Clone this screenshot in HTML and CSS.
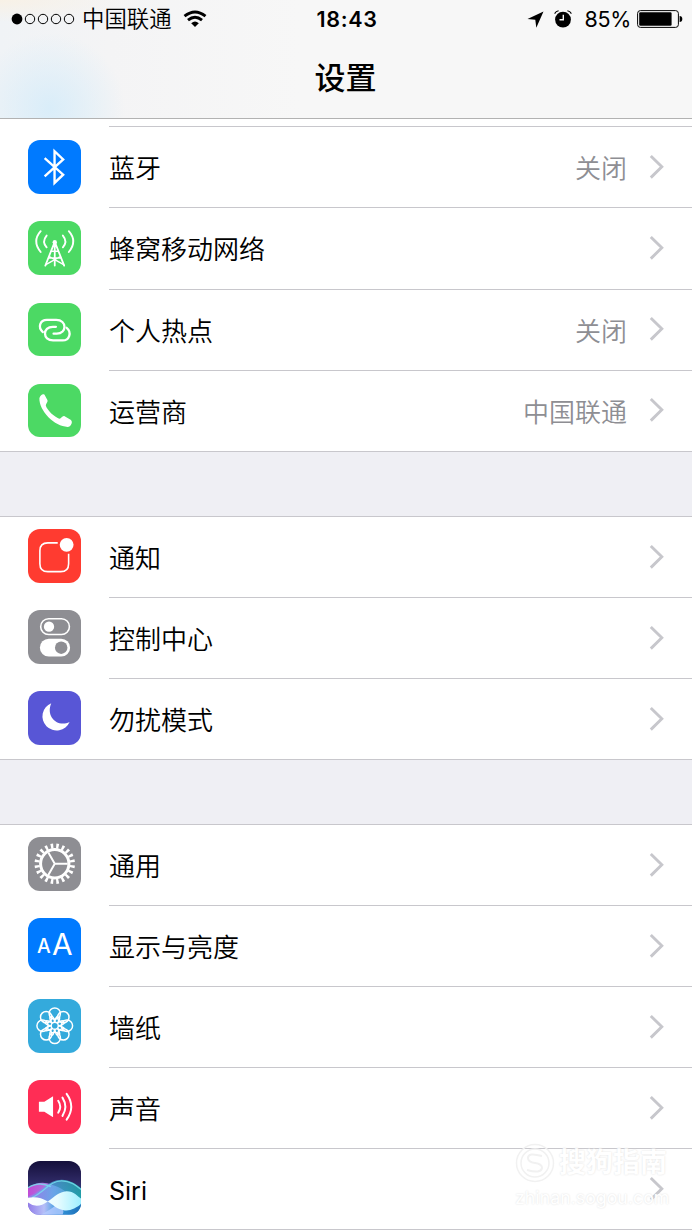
FILE: index.html
```html
<!DOCTYPE html>
<html lang="zh-CN">
<head>
  <meta charset="UTF-8">
  <meta name="viewport" content="width=device-width, initial-scale=1.0">
  <title>设置</title>
  <link rel="stylesheet" href="styles.css">
</head>
<body>

  <svg class="defs">
    <symbol id="chevron" viewBox="0 0 16 26">
      <path d="M1.8 2 L12.8 12.8 L1.8 23.6" fill="none" stroke="#c7c7cc" stroke-width="2.9"/>
    </symbol>
  </svg>

  <header>
    <div class="status">
      <div class="status-left">
        <svg class="signal" width="64" height="12" viewBox="0 0 64 12">
          <circle cx="6" cy="6" r="5.4"/>
          <g fill="none" stroke="#000" stroke-width="1">
            <circle cx="19" cy="6" r="4.7"/>
            <circle cx="32" cy="6" r="4.7"/>
            <circle cx="45" cy="6" r="4.7"/>
            <circle cx="58" cy="6" r="4.7"/>
          </g>
        </svg>
        <span class="carrier">中国联通</span>
        <svg class="wifi" width="24" height="18" viewBox="0 0 24 18">
          <g fill="none" stroke="#000" stroke-width="2.9">
            <path d="M1.5 6.2 Q12 -2.2 22.5 6.2"/>
            <path d="M5 10.2 Q12 4.4 19 10.2"/>
          </g>
          <path d="M8.2 13.2 Q12 10 15.8 13.2 L12 17 Z"/>
        </svg>
      </div>
      <div class="clock">18:43</div>
      <div class="status-right">
        <svg width="17" height="17" viewBox="0 0 17 17">
          <path d="M16.5 0.5 L0.5 8 L8.3 8.7 L9.3 16.8 Z"/>
        </svg>
        <svg class="alarm" width="18" height="18" viewBox="0 0 18 18">
          <circle cx="9" cy="9.6" r="7.9"/>
          <path d="M0.6 3.6 Q2 1.3 4.6 0.8 M17.4 3.6 Q16 1.3 13.4 0.8" fill="none" stroke="#000" stroke-width="1.1"/>
          <path d="M9.3 4.8 V9.8 H5.5" fill="none" stroke="#f7f7f7" stroke-width="1.4"/>
        </svg>
        <span class="percent">85%</span>
        <svg class="battery" width="46" height="18" viewBox="0 0 46 18">
          <rect x="0.6" y="0.6" width="40.8" height="16.8" rx="2.8" fill="none" stroke="#000" stroke-width="1"/>
          <rect x="2.2" y="2.2" width="32.4" height="13.6" rx="1.2"/>
          <path d="M42.6 6 Q45.3 6.2 45.3 9 Q45.3 11.8 42.6 12 Z"/>
        </svg>
      </div>
    </div>
    <h1>设置</h1>
  </header>

  <main>
    <div class="group first">
      <div class="tail"></div>
      <div class="row">
        <svg class="icon blue" viewBox="0 0 54 54">
          <path d="M16.8 18.3 L35.5 35 L26.8 43.3 V11.3 L35.5 19.6 L16.8 36.6" fill="none" stroke="#fff" stroke-width="2.4"/>
        </svg>
        <div class="cell"><span class="label">蓝牙</span><span class="value">关闭</span><svg class="chevron"><use href="#chevron"/></svg></div>
      </div>
      <div class="row">
        <svg class="icon green" viewBox="0 0 54 54">
          <g fill="none" stroke="#fff" stroke-width="1.9" stroke-linecap="round" stroke-linejoin="round">
            <path d="M12.8 10.3 Q3.8 20.5 12.8 31.3 M18.8 14.7 Q13.7 20.8 18.8 26.6"/>
            <path d="M41.2 10.3 Q50.2 20.5 41.2 31.3 M35.2 14.7 Q40.3 20.8 35.2 26.6"/>
            <path d="M27 21 L17.5 45 M27 21 L36.5 45 M27 21 V45" stroke-width="1.8"/>
            <path d="M23.8 30.5 H30.2 M21 37.3 H33 M18 44 L32 36.3 M36 44 L22 36.3" stroke-width="1.4"/>
          </g>
          <circle cx="27" cy="21.5" r="2.2" fill="#fff"/>
        </svg>
        <div class="cell"><span class="label">蜂窝移动网络</span><svg class="chevron"><use href="#chevron"/></svg></div>
      </div>
      <div class="row">
        <svg class="icon green" viewBox="0 0 54 54">
          <g fill="none" stroke="#fff" stroke-width="2.3" stroke-linecap="round">
            <path d="M15 29.3 C9.5 24.5 12.2 17 19 17 H28.5 C39.5 17 39.5 31 29 31 H25.8"/>
            <path d="M39 25 C44.5 29.5 41.8 37.8 35 37.8 H25.3 C14.5 37.8 14.5 24 25 24 H28.2"/>
          </g>
        </svg>
        <div class="cell"><span class="label">个人热点</span><span class="value">关闭</span><svg class="chevron"><use href="#chevron"/></svg></div>
      </div>
      <div class="row">
        <svg class="icon green" viewBox="0 0 54 54">
          <path d="M11.5 14.5 C12 11.5 15 9.5 16.7 10.8 L19.7 16.5 C20.3 18.6 17.6 20.2 18 22 C19.8 27 26.5 33.3 31.5 35 C33.6 35.3 34.3 32 36.5 32.3 L43 36 C46 38 43.2 43.3 40 43.3 C27 43.3 11 27 11.5 14.5 Z" fill="#fff"/>
        </svg>
        <div class="cell"><span class="label">运营商</span><span class="value">中国联通</span><svg class="chevron"><use href="#chevron"/></svg></div>
      </div>
    </div>

    <div class="group">
      <div class="row">
        <svg class="icon red" viewBox="0 0 54 54">
          <path d="M30 14 H20 Q12 14 12 22 V35 Q12 43 20 43 H33 Q41 43 41 35 V25" fill="none" stroke="#fff" stroke-width="1.6"/>
          <circle cx="39" cy="16" r="7" fill="#fff"/>
        </svg>
        <div class="cell"><span class="label">通知</span><svg class="chevron"><use href="#chevron"/></svg></div>
      </div>
      <div class="row">
        <svg class="icon gray" viewBox="0 0 54 54">
          <rect x="12.8" y="8.8" width="29" height="16" rx="8" fill="none" stroke="#fff" stroke-width="1.6"/>
          <circle cx="21.2" cy="16.8" r="5.2" fill="#fff"/>
          <rect x="12" y="29" width="30.5" height="18" rx="9" fill="#fff"/>
          <circle cx="33.5" cy="38" r="6.3" fill="#8e8e93"/>
        </svg>
        <div class="cell"><span class="label">控制中心</span><svg class="chevron"><use href="#chevron"/></svg></div>
      </div>
      <div class="row">
        <svg class="icon purple" viewBox="0 0 54 54">
          <path d="M23.5 12.3 A14.3 14.3 0 1 0 42 31.2 C30 37.5 17.5 25.5 23.5 12.3 Z" fill="#fff"/>
        </svg>
        <div class="cell"><span class="label">勿扰模式</span><svg class="chevron"><use href="#chevron"/></svg></div>
      </div>
    </div>

    <div class="group">
      <div class="row">
        <svg class="icon gray" viewBox="0 0 54 54">
          <g fill="none" stroke="#fff">
            <circle cx="27" cy="27" r="14.3" stroke-width="3"/>
            <!-- 20 teeth around the ring -->
            <circle cx="27" cy="27" r="17.9" stroke-width="5" pathLength="80" stroke-dasharray="1.8 2.2" stroke-dashoffset="-1.1"/>
            <path d="M27 27 H40 M27 27 L20.5 15.7 M27 27 L20.5 38.3" stroke-width="2"/>
          </g>
        </svg>
        <div class="cell"><span class="label">通用</span><svg class="chevron"><use href="#chevron"/></svg></div>
      </div>
      <div class="row">
        <svg class="icon blue" viewBox="0 0 54 54">
          <text class="aa" x="9" y="35.3" font-size="20.5" textLength="13.8" lengthAdjust="spacingAndGlyphs">A</text>
          <text class="aa big" x="24.3" y="37.3" font-size="29.5" textLength="20.8" lengthAdjust="spacingAndGlyphs">A</text>
        </svg>
        <div class="cell"><span class="label">显示与亮度</span><svg class="chevron"><use href="#chevron"/></svg></div>
      </div>
      <div class="row">
        <svg class="icon cyan" viewBox="0 0 54 54">
          <defs>
            <g id="petal">
              <circle cx="27" cy="14.7" r="5.7"/>
              <path d="M27 27 Q21.4 22 22.1 17.6 M27 27 Q32.6 22 31.9 17.6"/>
            </g>
          </defs>
          <g fill="none" stroke="#fff" stroke-width="1.5">
            <use href="#petal"/>
            <use href="#petal" transform="rotate(45 27 27)"/>
            <use href="#petal" transform="rotate(90 27 27)"/>
            <use href="#petal" transform="rotate(135 27 27)"/>
            <use href="#petal" transform="rotate(180 27 27)"/>
            <use href="#petal" transform="rotate(225 27 27)"/>
            <use href="#petal" transform="rotate(270 27 27)"/>
            <use href="#petal" transform="rotate(315 27 27)"/>
            <circle cx="27" cy="27" r="3.6" fill="#34aadc"/>
          </g>
        </svg>
        <div class="cell"><span class="label">墙纸</span><svg class="chevron"><use href="#chevron"/></svg></div>
      </div>
      <div class="row">
        <svg class="icon pink" viewBox="0 0 54 54">
          <path d="M11 22 H16.5 L25.3 16.5 V37.5 L16.5 32 H11 Z" fill="#fff"/>
          <g fill="none" stroke="#fff" stroke-width="2" stroke-linecap="round">
            <path d="M30.5 21 Q34.5 27 30.5 33"/>
            <path d="M34.8 17.8 Q40.6 27 34.8 36.2"/>
            <path d="M39 14 Q48.3 27 39 40"/>
          </g>
        </svg>
        <div class="cell"><span class="label">声音</span><svg class="chevron"><use href="#chevron"/></svg></div>
      </div>
      <div class="row">
        <svg class="icon" viewBox="0 0 54 54">
          <defs>
            <linearGradient id="night" x1="0" y1="0" x2="0" y2="1">
              <stop offset="0" stop-color="#140f3a"/>
              <stop offset=".4" stop-color="#2f2a66"/>
              <stop offset="1" stop-color="#1b84bd"/>
            </linearGradient>
            <linearGradient id="waveA">
              <stop offset="0" stop-color="#dc4ce4"/>
              <stop offset=".45" stop-color="#b98df4"/>
              <stop offset="1" stop-color="#7b68dc"/>
            </linearGradient>
            <linearGradient id="waveB">
              <stop offset="0" stop-color="#8d88ee"/>
              <stop offset=".5" stop-color="#4fb4ea"/>
              <stop offset="1" stop-color="#1dc0b4"/>
            </linearGradient>
            <linearGradient id="floor">
              <stop offset="0" stop-color="#8f7ee8"/>
              <stop offset=".3" stop-color="#c0c6fa"/>
              <stop offset=".55" stop-color="#2f96dc"/>
              <stop offset="1" stop-color="#1764b5"/>
            </linearGradient>
            <linearGradient id="glow">
              <stop offset="0" stop-color="#fff"/>
              <stop offset=".55" stop-color="#e8fcff"/>
              <stop offset="1" stop-color="#9defff"/>
            </linearGradient>
          </defs>
          <rect width="54" height="54" fill="url(#night)"/>
          <path d="M0 27 Q12 19 24 24 Q36 27 54 44 V54 H0 Z" fill="url(#waveA)" opacity=".85"/>
          <path d="M0 36 C15 31 20 19 34 19 C43 19 49 24 54 28 V54 H0 Z" fill="url(#waveB)" opacity=".7"/>
          <path d="M0 40 H54 V54 H0 Z" fill="url(#floor)" opacity=".85"/>
          <path d="M13 54 Q24 49 30 43 Q38 50 35 54 Z" fill="#b5cbff" opacity=".8"/>
          <path d="M0 27 Q11 20 23 26 M4 37 C17 31 22 20 34 20 C43 20 49 25 54 29" fill="none" stroke="#75e2ef" stroke-width="1.3" opacity=".8"/>
          <path d="M0 37 Q11 35 20 41 C27 36 31 31 39 30.5 C47 30.5 50 36 54 38 V43 C47 49 42 50 37 50 C29 49 25 44 20 41 Q9 49 0 42 Z" fill="url(#glow)"/>
        </svg>
        <div class="cell"><span class="label siri">Siri</span><svg class="chevron"><use href="#chevron"/></svg></div>
      </div>
    </div>
  </main>

  <div class="watermark">
    <svg width="40" height="40" viewBox="0 0 40 40">
      <g fill="none" stroke="#f1f1f1">
        <circle cx="20" cy="20" r="18.5" stroke-width="1.5"/>
        <circle cx="20" cy="20" r="14" stroke-width="1.5"/>
        <path d="M27 13 Q13 9 13 15 Q13 19 20 20 Q27 21 27 25 Q26 31 12 27" stroke-width="2"/>
      </g>
    </svg>
    <span class="mark-name">搜狗指南</span>
    <span class="mark-url">zhinan.sogou.com</span>
  </div>

</body>
</html>
```

FILE: styles.css
```css
:root {
  --line: #c8c7cc;
  --page: #efeff4;
  --muted: #8e8e93;
}

* {
  box-sizing: border-box;
}

body {
  margin: 0;
  height: 1230px;
  overflow: hidden;
  font-family: Inter, "Noto Sans CJK SC", sans-serif;
  background-color: var(--page);
  color: #000;
}

svg {
  display: block;
  flex: none;
}

.defs {
  display: none;
}

header {
  height: 119px;
  border-bottom: 1px solid #b2b2b2;
  background:
    radial-gradient(circle at 50px 108px, #d9edf9 0, rgba(217, 237, 249, 0) 75px),
    radial-gradient(ellipse at 0 0, #f8f1e6 0, rgba(248, 241, 230, 0) 130px),
    linear-gradient(90deg, #f0f3f6 0, #f4f4f5 110px, #f7f7f7 300px);
}

.status {
  display: grid;
  grid-template-columns: 1fr auto 1fr;
  align-items: center;
  height: 38px;
  padding: 0 9px 0 11px;
}

.status-left,
.status-right {
  display: flex;
  align-items: center;
}

.status-right {
  justify-content: flex-end;
}

.carrier {
  margin-left: 7px;
  font-size: 22.4px;
  font-weight: 350;
  line-height: 38px;
}

.wifi {
  margin-left: 11px;
}

.clock {
  font-size: 21.5px;
  font-weight: 600;
  letter-spacing: 0.7px;
}

.alarm {
  margin-left: 10px;
}

.percent {
  margin-left: 12px;
  font-size: 21.5px;
  letter-spacing: -0.3px;
}

.battery {
  margin-left: 6px;
}

h1 {
  margin: 0;
  padding-top: 1px;
  font-size: 31px;
  font-weight: 500;
  line-height: 78px;
  text-align: center;
  text-indent: -1px;
}

.group {
  margin-bottom: 64px;
  border-top: 1px solid var(--line);
  background-color: #fff;
}

.group.first {
  border-top: none;
}

.group:last-child {
  margin-bottom: 0;
}

.tail {
  height: 8px;
  margin-left: 109px;
  border-bottom: 1px solid var(--line);
}

.row {
  display: flex;
  height: 81px;
  padding-left: 27.5px;
}

.first .row {
  height: 81.25px;
}

.icon {
  width: 53.5px;
  height: 53.5px;
  margin: 12.3px 28px 0 0;
  border-radius: 12px;
}

.first .icon {
  margin-top: 13px;
}

.blue { background-color: #007aff; }
.green { background-color: #4cd964; }
.red { background-color: #ff3b30; }
.gray { background-color: #8e8e93; }
.purple { background-color: #5856d6; }
.cyan { background-color: #34aadc; }
.pink { background-color: #ff2d55; }

.aa {
  fill: #fff;
  font-family: Inter, sans-serif;
  font-weight: 500;
}

.big {
  font-weight: 400;
}

.cell {
  display: flex;
  flex: 1;
  align-items: center;
  height: 100%;
  padding-right: 27px;
  border-bottom: 1px solid var(--line);
  font-size: 26px;
  font-weight: 350;
  line-height: 76px;
}

.row:last-child {
  border-bottom: 1px solid var(--line);
}

.row:last-child .cell {
  border-bottom: none;
}

.group:last-child .row:last-child {
  border-bottom: none;
}

.group:last-child .row:last-child .cell {
  border-bottom: 1px solid var(--line);
}

.label,
.value {
  padding-top: 4px;
}

.label {
  flex: 1;
}

.siri {
  font-size: 25px;
  font-weight: 400;
}

.value {
  margin-right: 22px;
  color: var(--muted);
}

.chevron {
  width: 16px;
  height: 26px;
  margin-bottom: 1px;
}

.watermark {
  position: absolute;
  left: 515px;
  top: 1141px;
  display: grid;
  grid-template-columns: 40px auto;
  column-gap: 4px;
  align-items: center;
  color: #fff;
  text-shadow: 0 0 2px #dcdcdc;
}

.mark-name {
  font-size: 27px;
  font-weight: 700;
  line-height: 44px;
}

.mark-url {
  grid-column: 1 / 3;
  font-size: 17.8px;
  line-height: 26px;
}
```
